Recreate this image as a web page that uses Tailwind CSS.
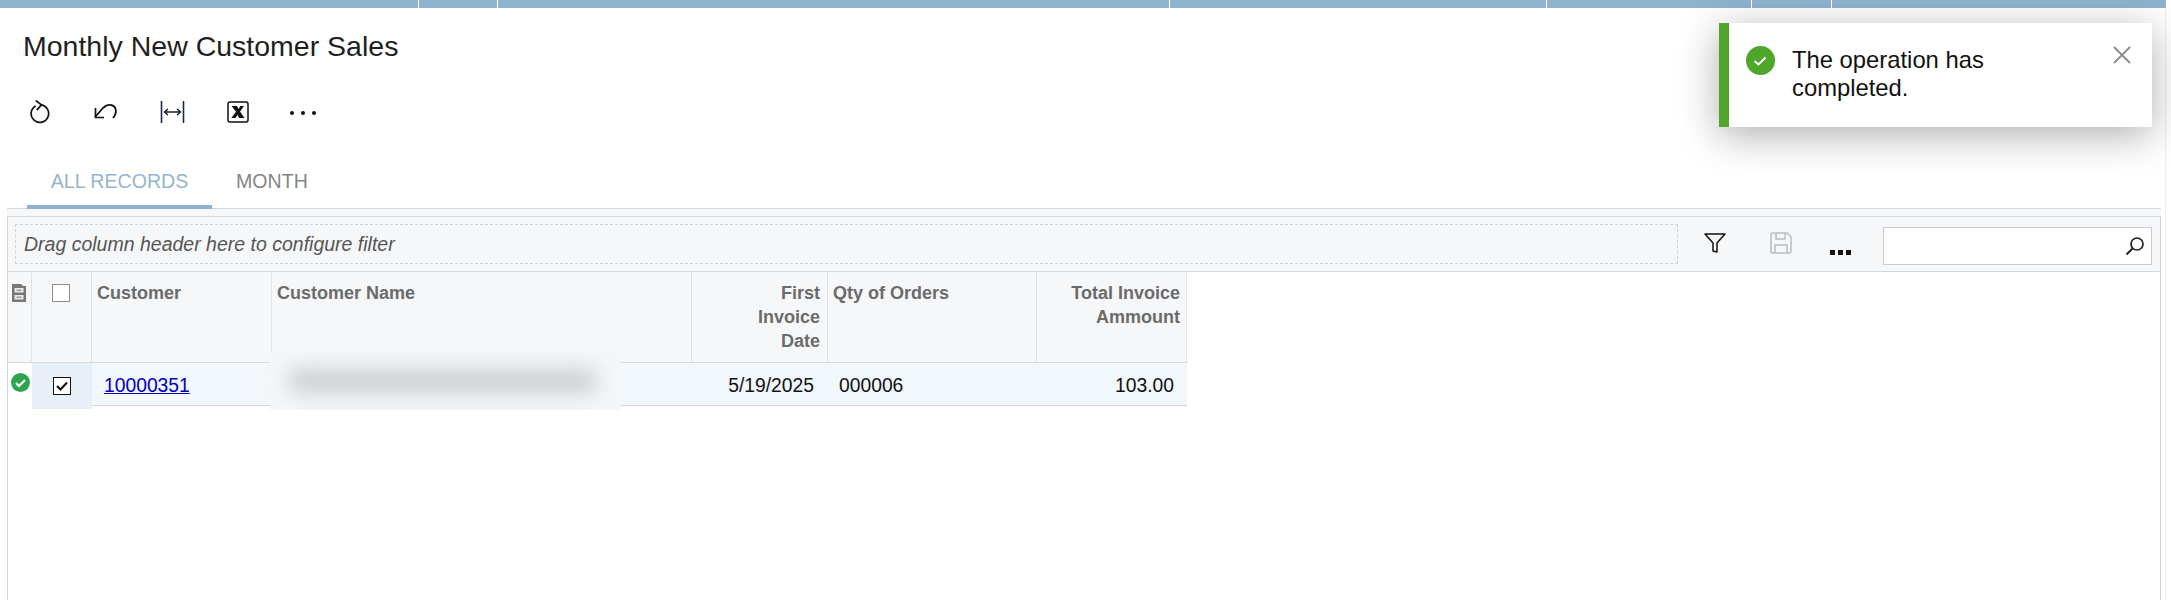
<!DOCTYPE html>
<html lang="en">

<head>
    <meta charset="UTF-8">
    <script src="https://cdn.jsdelivr.net/npm/@tailwindcss/browser@4"></script>
    <title>Monthly New Customer Sales</title>
</head>

<body class="bg-white font-['Liberation_Sans',Arial,sans-serif] overflow-hidden">
    <div class="relative h-[600px] w-[2171px] overflow-hidden">
        <!-- top bar -->
        <div class="flex h-[8px] w-[2166px] gap-px bg-white">
            <div class="w-[418px] bg-[#8db3cd]"></div>
            <div class="w-[78px] bg-[#8db3cd]"></div>
            <div class="w-[671px] bg-[#8db3cd]"></div>
            <div class="w-[376px] bg-[#8db3cd]"></div>
            <div class="w-[204px] bg-[#8db3cd]"></div>
            <div class="w-[79px] bg-[#8db3cd]"></div>
            <div class="flex-1 bg-[#8db3cd]"></div>
        </div>

        <div class="w-[2166px] h-[592px] border-r border-[#eceef0]">
            <h1 class="pl-[23px] pt-[22px] h-[80px] text-[28.5px] leading-[32px] text-[#1f1f1f]">Monthly New Customer Sales</h1>

            <!-- page toolbar -->
            <div class="flex items-center h-[48px] mb-[23px] pl-[30px]">
                <svg class="w-[21px] h-[24px] mr-[43px]" viewBox="0 0 22 24" fill="none" stroke="#111" stroke-width="1.8">
                    <path d="M6 5.600a9.200 9.200 0 1 0 5.500-1" />
                    <path d="M6 0L12 4.500 7 10" stroke-width="1.800" />
                </svg>
                <svg class="w-[24px] h-[22px] mr-[42px]" viewBox="0 0 24 22" fill="none" stroke="#111" stroke-width="1.8">
                    <path d="M1 16L9 7Q13 3 17 4C22 5 24 11 19 17" />
                    <path d="M1.500 7V16.500H10" stroke-width="1.700" />
                </svg>
                <svg class="w-[26px] h-[22px] mr-[41px]" viewBox="0 0 26 22" fill="none" stroke="#111">
                    <path d="M1.500 0v22M23.500 0v22" stroke="#1d2a44" stroke-width="1.600" />
                    <path d="M5 11h15" stroke-width="1.400" />
                    <path d="M8 8l-3.500 3L8 14M17 8l3.500 3L17 14" stroke-width="1.300" />
                </svg>
                <svg class="w-[22px] h-[22px] mr-[41px]" viewBox="0 0 22 22" fill="none">
                    <rect x="1" y="1" width="20" height="20" rx="2" stroke="#111" stroke-width="1.500" />
                    <path d="M4.500 5h5.500l1.500 3 1.800-3h3.700l-4 5.500 4.500 6.500H12l-1.500-3.300L8.500 17H4.300l4.700-6.200z" fill="#111" />
                </svg>
                <div class="flex gap-[7px] mt-[1px]">
                    <div class="w-[4px] h-[4px] rounded-full bg-[#111]"></div>
                    <div class="w-[4px] h-[4px] rounded-full bg-[#111]"></div>
                    <div class="w-[4px] h-[4px] rounded-full bg-[#111]"></div>
                </div>
            </div>

            <!-- tabs -->
            <div class="flex h-[50px] ml-[7px] w-[2154px] border-b border-[#d2d6da]">
                <div class="ml-[20px] w-[185px] h-[50px] border-b-[4px] border-[#8db3cd] flex justify-center pt-[10px] text-[19.6px] leading-[24px] text-[#93b5d0]">ALL RECORDS</div>
                <div class="ml-[24px] pt-[10px] text-[19.6px] leading-[24px] text-[#858585]">MONTH</div>
            </div>
            <div class="h-[7px] ml-[7px] w-[2154px] bg-[#f5f7f9]"></div>

            <!-- grid -->
            <div class="ml-[7px] w-[2154px] h-[384px] border-l border-r border-t border-[#d2d6da]">
                <div class="flex items-center h-[55px] bg-[#f5f7f9] border-b border-[#d2d6da]">
                    <div class="ml-[7px] w-[1663px] h-[40px] border border-dashed border-[#cfd3d7] pl-[8px] pt-[1px] flex items-center italic text-[19.5px] text-[#555]">Drag column header here to configure filter</div>
                    <svg class="ml-[26px] w-[22px] h-[22px] mt-[-3px]" viewBox="0 0 22 22" fill="none" stroke="#111" stroke-width="1.500">
                        <path d="M1 2h20l-8 9v9l-4-1v-8z" stroke-linejoin="round" />
                    </svg>
                    <svg class="ml-[44px] w-[22px] h-[22px] mt-[-3px]" viewBox="0 0 22 22" fill="none" stroke="#b8bcc0" stroke-width="1.500">
                        <path d="M1 3a2 2 0 0 1 2-2h14l4 4v14a2 2 0 0 1-2 2H3a2 2 0 0 1-2-2z" />
                        <path d="M6 1v6h9V1M5 21v-8h12v8" />
                    </svg>
                    <div class="ml-[38px] flex gap-[3px] mt-[16px]">
                        <div class="w-[5px] h-[5px] bg-[#111]"></div>
                        <div class="w-[5px] h-[5px] bg-[#111]"></div>
                        <div class="w-[5px] h-[5px] bg-[#111]"></div>
                    </div>
                    <div class="ml-[32px] w-[269px] h-[38px] mt-[3px] bg-white border border-[#c8ccd0] flex items-center justify-end pr-[6px]">
                        <svg class="w-[20px] h-[20px]" viewBox="0 0 20 20" fill="none" stroke="#222" stroke-width="1.700">
                            <circle cx="12" cy="8" r="6" />
                            <path d="M7.500 12.500L1.500 18.500" stroke-width="2" />
                        </svg>
                    </div>
                </div>

                <!-- header row -->
                <div class="grid grid-cols-[24px_60px_180px_420px_136px_209px_150px] h-[91px] w-[1179px] bg-[#f5f7f9] border-b border-[#d6dade] text-[18px] leading-[24px] font-bold text-[#6b6b6b]">
                    <div class="border-r border-[#dfe2e5] pl-[4px] pt-[12px]">
                        <svg class="w-[14px] h-[18px]" viewBox="0 0 14 18" fill="none">
                            <path d="M0 0h9l2 2h3v16H0z" fill="#777" />
                            <rect x="2.500" y="4" width="9" height="4.500" fill="#e8eaec" />
                            <rect x="2.500" y="11" width="9" height="4.500" fill="#e8eaec" />
                            <path d="M4.500 6.200h5M4.500 13.200h5" stroke="#777" stroke-width="1" />
                        </svg>
                    </div>
                    <div class="border-r border-[#dfe2e5] flex justify-center pt-[12px] pr-[1px]">
                        <div class="w-[18px] h-[18px] bg-white border border-[#8e8e8e]"></div>
                    </div>
                    <div class="border-r border-[#dfe2e5] px-[5px] pt-[9px]">Customer</div>
                    <div class="border-r border-[#dfe2e5] px-[5px] pt-[9px]">Customer Name</div>
                    <div class="border-r border-[#dfe2e5] pr-[7px] pt-[9px] text-right">First<br>Invoice<br>Date</div>
                    <div class="border-r border-[#dfe2e5] pl-[5px] pt-[9px]">Qty of Orders</div>
                    <div class="border-r border-[#dfe2e5] pr-[6px] pt-[9px] text-right">Total Invoice<br>Ammount</div>
                </div>

                <!-- data row -->
                <div class="grid grid-cols-[24px_60px_180px_420px_136px_209px_150px] h-[43px] w-[1179px] bg-[#f1f7fb] border-b border-[#d0d4d8] text-[19.300px] leading-[46px] text-[#111]">
                    <div class="bg-white flex justify-center pt-[10px]">
                        <svg class="w-[19px] h-[19px]" viewBox="0 0 19 19">
                            <circle cx="9.500" cy="9.500" r="9.500" fill="#2ea44f" />
                            <path d="M5 10l3 3 6-6" fill="none" stroke="#fff" stroke-width="2.200" />
                        </svg>
                    </div>
                    <div class="bg-[#e8eff8] flex justify-center items-center pr-[1px]">
                        <div class="w-[18px] h-[18px] bg-white border-[1.5px] border-[#111] flex items-center justify-center">
                            <svg class="w-[12px] h-[10px]" viewBox="0 0 12 10" fill="none" stroke="#111" stroke-width="2">
                                <path d="M1 5l3.500 3.500L11 1.500" />
                            </svg>
                        </div>
                    </div>
                    <div class="px-[12px]"><a href="#" class="text-[#0000c0] underline">10000351</a></div>
                    <div></div>
                    <div class="pr-[14px] text-right">5/19/2025</div>
                    <div class="pl-[11px]">000006</div>
                    <div class="pr-[13px] text-right">103.00</div>
                </div>
            </div>
        </div>

        <!-- blurred customer name -->
        <div class="absolute left-[270px] top-[352px] w-[351px] h-[58px] bg-[#f4f6f7] overflow-hidden">
            <div class="absolute left-[20px] top-[18px] w-[305px] h-[22px] bg-[#c9cccd] blur-[10px]"></div>
        </div>

        <!-- toast -->
        <div class="absolute left-[1719px] top-[23px] w-[433px] h-[104px] bg-white border-l-[10px] border-[#4ea72a] shadow-[0_8px_40px_rgba(0,0,0,0.32)] flex">
            <svg class="ml-[17px] mt-[23px] w-[29px] h-[29px] shrink-0" viewBox="0 0 29 29">
                <circle cx="14.500" cy="14.500" r="14.500" fill="#4ea72a" />
                <path d="M8.500 15l4 3.500 7-7" fill="none" stroke="#fff" stroke-width="2" />
            </svg>
            <div class="ml-[17px] mt-[23px] w-[250px] text-[23.800px] leading-[28px] text-[#111]">The operation has completed.</div>
            <svg class="ml-[71px] mt-[23px] w-[18px] h-[18px] shrink-0" viewBox="0 0 18 18" stroke="#8a8a8a" stroke-width="1.800">
                <path d="M1 1l16 16M17 1L1 17" />
            </svg>
        </div>
    </div>
</body>

</html>
